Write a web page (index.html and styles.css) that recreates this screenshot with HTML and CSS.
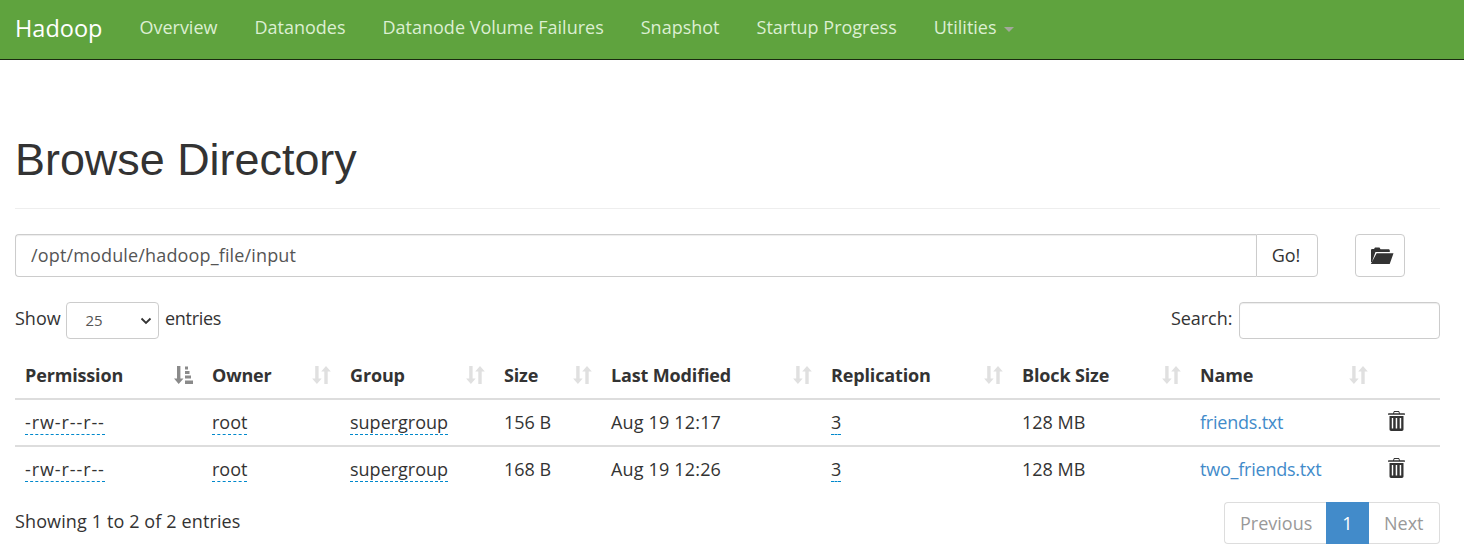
FILE: index.html
```html
<!DOCTYPE html>
<html lang="en">
<head>
<meta charset="utf-8">
<title>Browse Directory</title>
<link rel="stylesheet" href="styles.css">
</head>
<body>
<nav class="navbar">
  <a class="brand" href="#">Hadoop</a>
  <ul class="nav">
    <li><a href="#">Overview</a></li>
    <li><a href="#">Datanodes</a></li>
    <li><a href="#">Datanode Volume Failures</a></li>
    <li><a href="#">Snapshot</a></li>
    <li><a href="#">Startup Progress</a></li>
    <li><a href="#">Utilities <span class="caret"></span></a></li>
  </ul>
</nav>
<main class="container">
  <header class="page-header"><h1>Browse Directory</h1></header>
  <div class="path-row">
    <div class="input-group">
      <input class="path-input" type="text" value="/opt/module/hadoop_file/input">
      <button class="go" type="button">Go!</button>
    </div>
    <button class="folder" type="button" aria-label="Create directory">
      <svg class="folder-icon" width="24" height="18" viewBox="0 0 24 18"><path fill="#333" d="M1 15V3.200C1 2.400 1.600 2 2.200 2H4L5 .5h4.500L10.500 2.200H18.500C19.300 2.200 19.800 2.800 19.800 3.500V5H5.500L1.900 15z M6.600 6.300H23.500L19.700 17H.9l.2-.4z"/></svg>
    </button>
  </div>
  <div class="controls">
    <label class="length">Show
      <select class="length-select"><option>25</option></select>
      <span class="entries">entries</span></label>
    <label class="search">Search: <input class="search-input" type="text"></label>
  </div>
  <table class="files">
    <colgroup>
      <col class="c1"><col class="c2"><col class="c3"><col class="c4"><col class="c5"><col class="c6"><col class="c7"><col class="c8"><col class="c9">
    </colgroup>
    <thead>
      <tr>
        <th>Permission<svg class="sort active" viewBox="0 0 19 18"><path d="M3 0h3.400v12.500H9.500L4.700 18 0 12.500h3z"/><path d="M11 .5h3v3h-3zM11 5h4.500v3H11zM11 9.500h6v3h-6zM11 14.500h8V18h-8z"/></svg></th>
        <th>Owner<svg class="sort" viewBox="0 0 19 18"><path d="M3.200 0h3.400v12.500H9.700L4.900 18 .1 12.500h3.100z"/><path d="M12.300 18V5.500H9.200L14 0l4.800 5.500h-3.100V18z"/></svg></th>
        <th>Group<svg class="sort" viewBox="0 0 19 18"><path d="M3.200 0h3.400v12.500H9.700L4.900 18 .1 12.500h3.100z"/><path d="M12.300 18V5.500H9.200L14 0l4.800 5.500h-3.100V18z"/></svg></th>
        <th>Size<svg class="sort" viewBox="0 0 19 18"><path d="M3.200 0h3.400v12.500H9.700L4.900 18 .1 12.500h3.100z"/><path d="M12.300 18V5.500H9.200L14 0l4.800 5.500h-3.100V18z"/></svg></th>
        <th>Last Modified<svg class="sort" viewBox="0 0 19 18"><path d="M3.200 0h3.400v12.500H9.700L4.900 18 .1 12.500h3.100z"/><path d="M12.300 18V5.500H9.200L14 0l4.800 5.500h-3.100V18z"/></svg></th>
        <th>Replication<svg class="sort" viewBox="0 0 19 18"><path d="M3.200 0h3.400v12.500H9.700L4.900 18 .1 12.500h3.100z"/><path d="M12.300 18V5.500H9.200L14 0l4.800 5.500h-3.100V18z"/></svg></th>
        <th>Block Size<svg class="sort" viewBox="0 0 19 18"><path d="M3.200 0h3.400v12.500H9.700L4.900 18 .1 12.500h3.100z"/><path d="M12.300 18V5.500H9.200L14 0l4.800 5.500h-3.100V18z"/></svg></th>
        <th>Name<svg class="sort" viewBox="0 0 19 18"><path d="M3.200 0h3.400v12.500H9.700L4.900 18 .1 12.500h3.100z"/><path d="M12.300 18V5.500H9.200L14 0l4.800 5.500h-3.100V18z"/></svg></th>
        <th></th>
      </tr>
    </thead>
    <tbody>
      <tr>
        <td><span class="editable perm">-rw-r--r--</span></td>
        <td><span class="editable">root</span></td>
        <td><span class="editable">supergroup</span></td>
        <td>156 B</td>
        <td class="date">Aug 19 12:17</td>
        <td><span class="editable">3</span></td>
        <td>128 MB</td>
        <td><a class="file" href="#">friends.txt</a></td>
        <td class="trash-cell"><svg class="trash" viewBox="0 0 17 20"><path fill="#333" d="M6 0h5l1 2.200h4.300c.4 0 .7.300.7.700v.9H0v-.9c0-.4.300-.7.700-.7H5zM6.500 1 6 2.200h5L10.500 1zM1.500 5h14v13.300c0 1-.7 1.700-1.600 1.700H3.100c-.9 0-1.600-.7-1.600-1.700zM3.800 7v10.500h1.400V7zm3.900 0v10.500h1.500V7zm4 0v10.500h1.500V7z" fill-rule="evenodd"/></svg></td>
      </tr>
      <tr>
        <td><span class="editable perm">-rw-r--r--</span></td>
        <td><span class="editable">root</span></td>
        <td><span class="editable">supergroup</span></td>
        <td>168 B</td>
        <td class="date">Aug 19 12:26</td>
        <td><span class="editable">3</span></td>
        <td>128 MB</td>
        <td><a class="file" href="#">two_friends.txt</a></td>
        <td class="trash-cell"><svg class="trash" viewBox="0 0 17 20"><path fill="#333" d="M6 0h5l1 2.200h4.300c.4 0 .7.300.7.700v.9H0v-.9c0-.4.300-.7.700-.7H5zM6.500 1 6 2.200h5L10.500 1zM1.500 5h14v13.300c0 1-.7 1.700-1.600 1.700H3.100c-.9 0-1.600-.7-1.600-1.700zM3.800 7v10.500h1.400V7zm3.900 0v10.500h1.500V7zm4 0v10.500h1.500V7z" fill-rule="evenodd"/></svg></td>
      </tr>
    </tbody>
  </table>
  <div class="footer-row">
    <div class="info">Showing 1 to 2 of 2 entries</div>
    <div class="pagination">
      <a class="page prev">Previous</a>
      <a class="page current">1</a>
      <a class="page next">Next</a>
    </div>
  </div>
</main>
</body>
</html>
```

FILE: styles.css
```css
* { box-sizing: border-box; }
html, body { margin: 0; padding: 0; }
body {
  font-family: "Open Sans", "Noto Sans", sans-serif;
  font-size: 18px;
  line-height: 25px;
  color: #333;
  background: #fff;
  overflow: hidden;
}
a { color: #428bca; text-decoration: none; }

.navbar {
  display: flex;
  height: 60px;
  background: #5fa33e;
  border-bottom: 1px solid #1a2a10;
}
.brand {
  color: #fff;
  font-size: 23.500px;
  line-height: 56px;
  padding: 0 37px 0 15px;
}
.nav { display: flex; list-style: none; margin: 0; padding: 0; gap: 37px; }
.nav a { color: #dcefd2; font-size: 18px; line-height: 55px; display: block; }
.caret {
  display: inline-block;
  margin-left: 3px;
  vertical-align: middle;
  border-top: 5px solid #a3a89b;
  border-left: 5px solid transparent;
  border-right: 5px solid transparent;
}

.container { padding: 0 24px 0 15px; }
.page-header { height: 149px; padding-top: 70px; border-bottom: 1px solid #eee; }
h1 {
  margin: 0;
  font-family: "Liberation Sans", Arial, sans-serif;
  font-weight: 400;
  font-size: 44.900px;
  line-height: 60px;
  color: #333;
}

.path-row { display: flex; justify-content: space-between; margin-top: 25px; }
.input-group { display: flex; width: 1303px; height: 43px; }
.path-input {
  flex: 1;
  min-width: 0;
  height: 43px;
  padding: 0 15px 2px;
  font: inherit;
  letter-spacing: .15px;
  color: #555;
  border: 1px solid #ccc;
  border-right: 0;
  border-radius: 4px 0 0 4px;
  box-shadow: inset 0 1px 1px rgba(0,0,0,.075);
}
.go {
  width: 62px;
  font: inherit;
  color: #333;
  background: #fff;
  border: 1px solid #ccc;
  border-radius: 0 4px 4px 0;
  padding: 0 2px 0 0;
}
.folder {
  display: flex;
  align-items: center;
  justify-content: center;
  width: 50px;
  height: 43px;
  margin-right: 35px;
  padding: 0;
  background: #fff;
  border: 1px solid #ccc;
  border-radius: 4px;
}
.folder-icon { margin-left: 4px; }

.controls { display: flex; justify-content: space-between; align-items: center; margin-top: 25px; height: 37px; }
.length { word-spacing: -1px; }
.entries { letter-spacing: -.3px; }
.length-select {
  appearance: none;
  width: 93px;
  height: 37px;
  margin: 0 2px;
  padding: 0 18px;
  font: inherit;
  font-size: 15px;
  color: #555;
  background: #fff url("data:image/svg+xml,%3Csvg xmlns='http://www.w3.org/2000/svg' width='12' height='8' viewBox='0 0 12 8'%3E%3Cpath d='M1.500 1.500 6 6l4.500-4.500' fill='none' stroke='%23333' stroke-width='1.800'/%3E%3C/svg%3E") no-repeat right 6px center;
  border: 1px solid #ccc;
  border-radius: 4px;
  vertical-align: middle;
}
.search { letter-spacing: -.05px; }
.search-input {
  width: 201px;
  height: 37px;
  border: 1px solid #ccc;
  border-radius: 4px;
  vertical-align: middle;
  margin-left: 2px;
  box-shadow: inset 0 1px 1px rgba(0,0,0,.075);
}

.files { width: 1425px; table-layout: fixed; border-collapse: collapse; margin-top: 12px; }
.c1 { width: 187px; } .c2 { width: 138px; } .c3 { width: 154px; } .c4 { width: 107px; }
.c5 { width: 220px; } .c6 { width: 191px; } .c7 { width: 178px; } .c8 { width: 187px; } .c9 { width: 63px; }
th {
  position: relative;
  text-align: left;
  font-weight: 700;
  height: 48px;
  padding: 2px 10px 0;
  letter-spacing: -.15px;
  border-bottom: 2px solid #ddd;
}
td {
  height: 47px;
  padding: 0 10px;
  border-bottom: 2px solid #ddd;
}
tbody tr:last-child td { border-bottom: 0; height: 45px; }
.sort {
  position: absolute;
  right: 9px;
  top: 15px;
  width: 19px;
  height: 18px;
  fill: #e0e0e0;
}
.sort.active { fill: #8a8a8a; }
.editable { border-bottom: 1px dashed #08c; }
.perm { letter-spacing: .9px; }
.date { letter-spacing: .17px; }
.file { letter-spacing: -.22px; }
.trash-cell { padding: 0 0 0 9px; }
.trash { display: block; width: 17px; height: 20px; margin-left: 2px; margin-top: -3px; }

.footer-row { display: flex; justify-content: space-between; align-items: flex-start; margin-top: 11px; }
.info { padding-top: 7px; letter-spacing: .12px; }
.pagination { display: flex; height: 42px; }
.page {
  display: block;
  padding: 0 15px;
  line-height: 40px;
  color: #999;
  border: 1px solid #ddd;
  background: #fff;
}
.prev { border-radius: 4px 0 0 4px; border-right: 0; width: 102px; }
.next { border-radius: 0 4px 4px 0; border-left: 0; width: 71px; }
.current { width: 43px; text-align: center; color: #fff; background: #428bca; border-color: #428bca; padding: 0; }
```
